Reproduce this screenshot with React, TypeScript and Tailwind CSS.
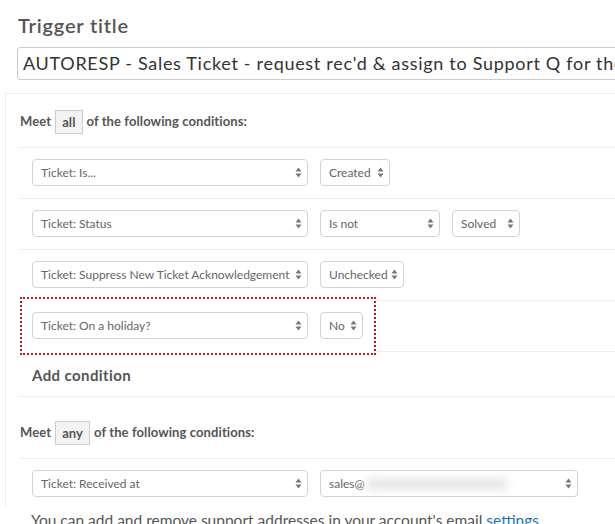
import type { ReactNode } from 'react';

function Arrows() {
  return (
    <svg width="7" height="11" viewBox="0 0 7 11" className="shrink-0">
      <path d="M0.5 4.5 L3.5 0.5 L6.5 4.5 Z" fill="#777" />
      <path d="M0.5 6.5 L6.5 6.5 L3.5 10.5 Z" fill="#777" />
    </svg>
  );
}

function Select({ className, children }: { className: string; children: ReactNode }) {
  return (
    <div
      className={`flex h-[27px] items-center justify-between rounded-[4px] border border-[#d3d3d3] pl-[8px] pr-[5px] text-[12px] text-[#666] whitespace-nowrap ${className}`}
    >
      <span className="flex items-center">{children}</span>
      <Arrows />
    </div>
  );
}

function MeetHeader({ word, className }: { word: string; className: string }) {
  return (
    <div className={`flex items-center text-[13px] font-bold tracking-[0.1px] text-[#555] ${className}`}>
      <span>Meet</span>
      <span className="mx-[4px] h-[24px] border border-[#ccc] bg-[#f3f3f3] px-[6px] leading-[22px]">
        {word}
      </span>
      <span>of the following conditions:</span>
    </div>
  );
}

function Row({ children }: { children: ReactNode }) {
  return (
    <div className="flex gap-[12px] border-t border-[#eee] pb-[12px] pl-[12px] pt-[11px]">
      {children}
    </div>
  );
}

export default function App() {
  return (
    <div className="relative h-[524px] w-[615px] overflow-hidden bg-white font-['Lato',sans-serif] text-[#555]">
      <div className="pl-[18px] pt-[13px] text-[20px] font-semibold leading-[24px] tracking-[0.8px] text-[#555]">
        Trigger title
      </div>
      <div className="ml-[17px] mt-[10px] h-[33px] w-[640px] whitespace-nowrap rounded-[3px] border border-[#ccc] pl-[5px] text-[18px] leading-[31px] tracking-[0.7px] text-[#333]">
        AUTORESP - Sales Ticket - request rec'd &amp; assign to Support Q for the
      </div>

      <div className="ml-[5px] mt-[13px] w-[640px] border-l border-t border-[#eee] pl-[14px]">
        <MeetHeader word="all" className="pb-[13px] pt-[16px]" />

        <Row>
          <Select className="w-[276px]">Ticket: Is...</Select>
          <Select className="w-[70px]">Created</Select>
        </Row>
        <Row>
          <Select className="w-[276px]">Ticket: Status</Select>
          <Select className="w-[120px]">Is not</Select>
          <Select className="w-[68px]">Solved</Select>
        </Row>
        <Row>
          <Select className="w-[276px]">Ticket: Suppress New Ticket Acknowledgement</Select>
          <Select className="w-[84px]">Unchecked</Select>
        </Row>

        {/* highlighted row */}
        <div className="relative">
          <div className="ml-[356px] h-px bg-[#eee]" />
          <div className="flex gap-[12px] pb-[12px] pl-[12px] pt-[11px]">
            <Select className="w-[276px]">Ticket: On a holiday?</Select>
            <Select className="w-[43px]">No</Select>
          </div>
          <div className="absolute left-0 top-[-3px] h-[58px] w-[356px] border-2 border-dotted border-[#bb1a20]" />
        </div>

        <div className="ml-[356px] h-px bg-[#eee]" />
        <div className="pb-[11px] pl-[12px] pt-[13px] text-[15px] font-bold leading-[20px] tracking-[0.4px] text-[#555]">
          Add condition
        </div>

        <div className="border-t border-[#eee]">
          <MeetHeader word="any" className="pb-[13px] pt-[24px]" />
        </div>

        <div className="flex gap-[12px] border-t border-[#eee] pb-[10px] pl-[12px] pt-[11px]">
          <Select className="w-[276px]">Ticket: Received at</Select>
          <Select className="w-[258px]">
            sales@
            <span className="ml-[2px] inline-block h-[14px] w-[140px] bg-[#e9e9e9] blur-[4px]" />
          </Select>
        </div>
      </div>

      <div className="mt-[7px] h-[12px] overflow-hidden pl-[31px]">
        <div className="-mt-[2px] whitespace-nowrap text-[15.5px] leading-[16px] text-[#555]">
          You can add and remove support addresses in your account's email{' '}
          <span className="text-[#1f73b7]">settings</span>.
        </div>
      </div>
    </div>
  );
}
